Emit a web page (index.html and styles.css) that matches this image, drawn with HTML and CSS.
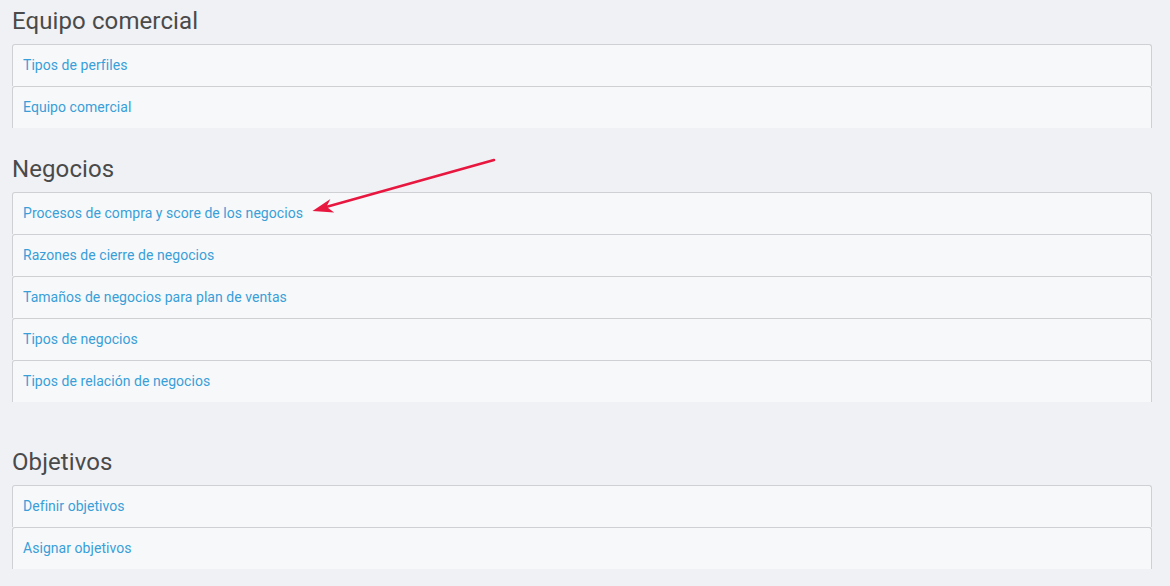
FILE: index.html
```html
<!DOCTYPE html>
<html lang="es">
<head>
<meta charset="utf-8">
<title>Configuración</title>
<link rel="stylesheet" href="styles.css">
</head>
<body>
<div class="page">
  <section class="section">
    <h3 class="section-title">Equipo comercial</h3>
    <ul class="list">
      <li class="item"><a class="link" href="#">Tipos de perfiles</a></li>
      <li class="item"><a class="link" href="#">Equipo comercial</a></li>
    </ul>
  </section>
  <section class="section section-2">
    <h3 class="section-title">Negocios</h3>
    <ul class="list">
      <li class="item"><a class="link" href="#">Procesos de compra y score de los negocios</a></li>
      <li class="item"><a class="link" href="#">Razones de cierre de negocios</a></li>
      <li class="item"><a class="link" href="#">Tamaños de negocios para plan de ventas</a></li>
      <li class="item"><a class="link" href="#">Tipos de negocios</a></li>
      <li class="item"><a class="link" href="#">Tipos de relación de negocios</a></li>
    </ul>
  </section>
  <section class="section section-3">
    <h3 class="section-title">Objetivos</h3>
    <ul class="list">
      <li class="item"><a class="link" href="#">Definir objetivos</a></li>
      <li class="item"><a class="link" href="#">Asignar objetivos</a></li>
    </ul>
  </section>
  <svg class="arrow" width="1170" height="586" viewBox="0 0 1170 586" aria-hidden="true">
    <line x1="494" y1="160" x2="326" y2="207" stroke="#e8173f" stroke-width="2.6" stroke-linecap="round"/>
    <polygon points="312.5,211 330.4,198.9 326.5,206.8 334.2,212.6" fill="#e8173f"/>
  </svg>
</div>
</body>
</html>
```

FILE: styles.css
```css
html, body {
  margin: 0;
  padding: 0;
  background: #f0f1f5;
}
body {
  font-family: Roboto, "Liberation Sans", Arial, sans-serif;
}
.page {
  position: relative;
  padding: 0 18px 0 12px;
  min-height: 586px;
  box-sizing: border-box;
}
.section-title {
  margin: 0;
  padding: 5px 0 7px;
  font-size: 24px;
  letter-spacing: 0.1px;
  font-weight: 400;
  line-height: 32px;
  color: #4a4a4a;
}
.section-2 {
  margin-top: 20px;
}
.section-3 {
  margin-top: 39px;
}
.list {
  list-style: none;
  margin: 0;
  padding: 0;
}
.item {
  height: 41px;
  box-sizing: border-box;
  height: 42px;
  display: flex;
  align-items: center;
  padding: 0 10px 1px;
  background: #f7f8fa;
  border: 1px solid #cfd0d3;
  border-bottom: none;
  border-radius: 3px 3px 0 0;
}
.link {
  font-size: 14px;
  letter-spacing: 0.05px;
  color: #399fd8;
  text-decoration: none;
}
.arrow {
  position: absolute;
  left: 0;
  top: 0;
  pointer-events: none;
}
```
